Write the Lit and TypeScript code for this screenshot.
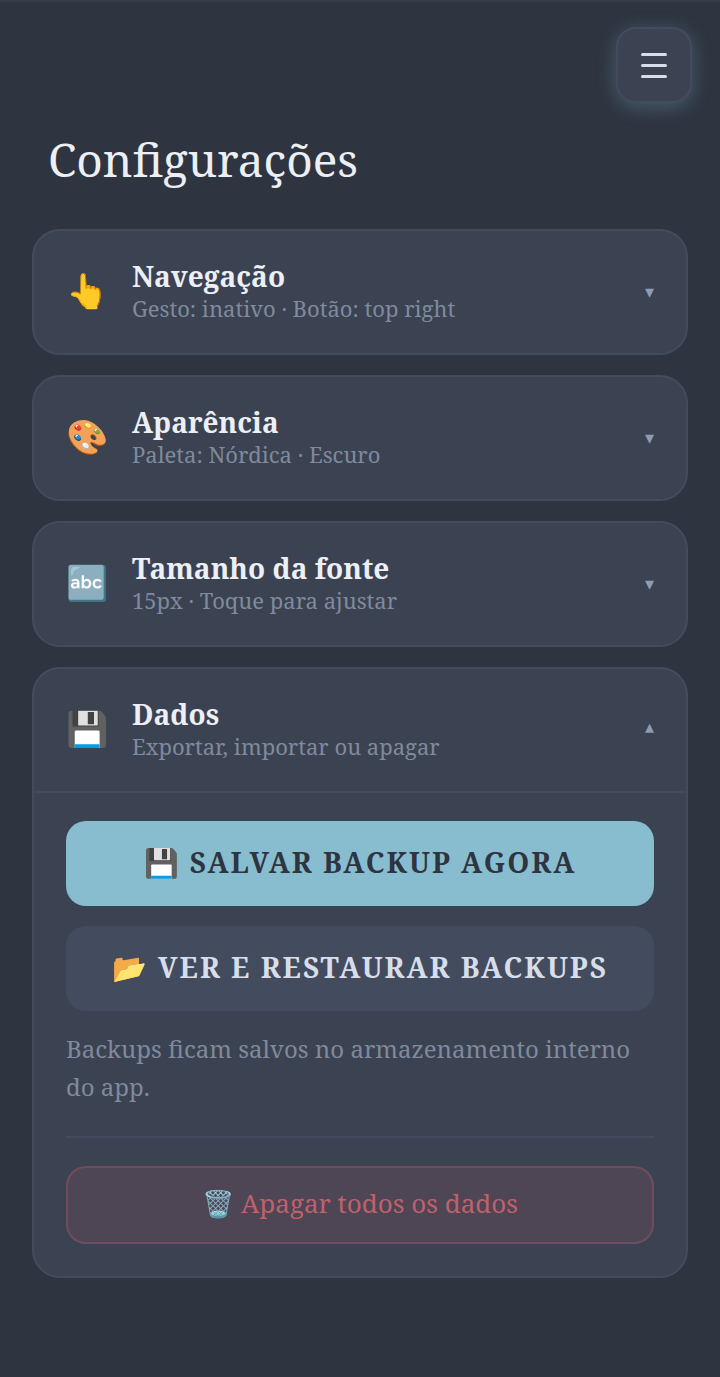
import { LitElement, html, css } from "lit";
import { customElement } from "lit/decorators.js";

const rows = [
  ["👆", "Navegação", "Gesto: inativo · Botão: top right"],
  ["🎨", "Aparência", "Paleta: Nórdica · Escuro"],
  ["🔤", "Tamanho da fonte", "15px · Toque para ajustar"],
];

@customElement("app-root")
export class AppRoot extends LitElement {
  static styles = css`
    :host { display: block; min-height: 1377px; background: #2e3440; border-top: 2px solid #383d4a; color: #eceff4; font-family: "Noto Serif", "DejaVu Serif", serif; box-sizing: border-box; }
    .top { display: flex; justify-content: flex-end; padding: 25px 28px 0 0; }
    .menu { width: 76px; height: 76px; box-sizing: border-box; border-radius: 20px; background: #3b4252; border: 2px solid #434c5e; box-shadow: 0 4px 20px rgba(136,192,208,.3); display: flex; flex-direction: column; align-items: center; justify-content: center; gap: 8px; }
    .menu i { display: block; width: 26px; height: 3px; background: #d8dee9; border-radius: 2px; }
    h1 { margin: 26px 0 0 48px; font-size: 46px; line-height: 60px; font-weight: 400; }
    .list { margin: 40px 32px 0; display: flex; flex-direction: column; gap: 20px; }
    .card { background: #3b4252; border: 2px solid #434c5e; border-radius: 28px; }
    .head { display: flex; align-items: center; box-sizing: border-box; height: 122px; padding: 0 32px 2px; }
    .icon { width: 66px; font-size: 34px; margin-bottom: 2px; }
    .txt { flex: 1; }
    .t { font-size: 28px; font-weight: 700; line-height: 34px; }
    .s { font-size: 22px; line-height: 30px; color: #7f8a9c; }
    .chev { font-size: 18px; color: #8f9bb0; }
    .chev.up { margin-bottom: 6px; }
    .body { border-top: 2px solid #434c5e; padding: 28px 32px 32px; display: flex; flex-direction: column; }
    .btn { height: 85px; box-sizing: border-box; padding-bottom: 4px; border-radius: 20px; display: flex; align-items: center; justify-content: center; gap: 9px; font-size: 28px; font-weight: 700; letter-spacing: 2px; }
    .primary { background: #88bdcf; color: #2e3440; margin-bottom: 20px; }
    .secondary { background: #434c5e; color: #d8dee9; }
    .note { margin: 19px 0 30px; font-size: 24px; line-height: 38px; color: #7f8a9c; }
    .rule { border-top: 2px solid #434c5e; margin-bottom: 28px; }
    .danger { height: 78px; box-sizing: border-box; padding-bottom: 4px; border-radius: 20px; background: rgba(191,97,106,.15); border: 2px solid rgba(191,97,106,.3); color: #bf616a; display: flex; align-items: center; justify-content: center; gap: 7px; font-size: 26px; }
  `;
  render() {
    return html`<div class="top"><div class="menu"><i></i><i></i><i></i></div></div>
      <h1>Configurações</h1>
      <div class="list">
        ${rows.map((r) => html`<div class="card"><div class="head"><div class="icon">${r[0]}</div><div class="txt"><div class="t">${r[1]}</div><div class="s">${r[2]}</div></div><div class="chev">▾</div></div></div>`)}
        <div class="card">
          <div class="head"><div class="icon">💾</div><div class="txt"><div class="t">Dados</div><div class="s">Exportar, importar ou apagar</div></div><div class="chev up">▴</div></div>
          <div class="body">
            <div class="btn primary"><span>💾</span><span>SALVAR BACKUP AGORA</span></div>
            <div class="btn secondary"><span>📂</span><span>VER E RESTAURAR BACKUPS</span></div>
            <div class="note">Backups ficam salvos no armazenamento interno do app.</div>
            <div class="rule"></div>
            <div class="danger"><span>🗑️</span><span>Apagar todos os dados</span></div>
          </div>
        </div>
      </div>`;
  }
}
